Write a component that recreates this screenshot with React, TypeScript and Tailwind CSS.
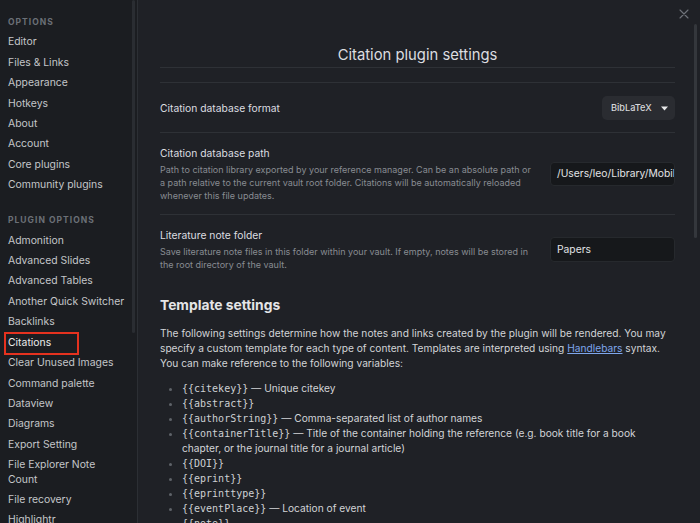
import React from 'react';

const generalItems = ['Editor', 'Files & Links', 'Appearance', 'Hotkeys', 'About', 'Account', 'Core plugins', 'Community plugins'];

const pluginItems = [
  'Admonition',
  'Advanced Slides',
  'Advanced Tables',
  'Another Quick Switcher',
  'Backlinks',
  'Citations',
  'Clear Unused Images',
  'Command palette',
  'Dataview',
  'Diagrams',
  'Export Setting',
  'File Explorer Note Count',
  'File recovery',
  'Highlightr',
  'Hover Editor',
];

const variables: [string, string][] = [
  ['citekey', 'Unique citekey'],
  ['abstract', ''],
  ['authorString', 'Comma-separated list of author names'],
  ['containerTitle', 'Title of the container holding the reference (e.g. book title for a book chapter, or the journal title for a journal article)'],
  ['DOI', ''],
  ['eprint', ''],
  ['eprinttype', ''],
  ['eventPlace', 'Location of event'],
  ['note', ''],
  ['page', 'Page or page range'],
];

const SidebarHeading = ({ children }: { children: React.ReactNode }) => (
  <div className="text-[8.5px] font-bold uppercase tracking-[0.12em] leading-[14.4px] py-[3px] text-[#6b7077]">{children}</div>
);

const SidebarItem = ({ label }: { label: string }) => {
  const active = label === 'Citations';
  return (
    <div className={`relative text-[10.4px] leading-[14.4px] py-[3px] ${active ? 'text-[#eceded]' : 'text-[#c4c6c9]'}`}>
      {label}
      {active && <span className="absolute left-[-4px] top-[-1px] w-[75px] h-[23px] border-2 border-[#e5321f]" />}
    </div>
  );
};

const SettingRow = ({ name, desc, control }: { name: string; desc?: string; control: React.ReactNode }) => (
  <div className="flex items-center border-t border-[#2e3136] pt-[13px] pb-[12px]">
    <div className="flex-1 min-w-0 pr-[14px]">
      <div className="text-[10.3px] leading-[15px] text-[#dcdde0]">{name}</div>
      {desc && <div className="mt-[2px] text-[9px] leading-[13px] text-[#888c92]">{desc}</div>}
    </div>
    {control}
  </div>
);

export default function App() {
  return (
    <div className="flex h-[523px] w-[700px] overflow-hidden bg-[#1f2126] font-['Inter',sans-serif]">
      {/* Sidebar */}
      <aside className="w-[132px] shrink-0 bg-[#1b1d21] pl-[8px] pr-[6px] pt-[12px]">
        <SidebarHeading>Options</SidebarHeading>
        {generalItems.map((i) => (
          <SidebarItem key={i} label={i} />
        ))}
        <div className="mt-[14.6px]">
          <SidebarHeading>Plugin options</SidebarHeading>
        </div>
        {pluginItems.map((i) => (
          <SidebarItem key={i} label={i} />
        ))}
      </aside>

      {/* Sidebar scrollbar + border */}
      <div className="flex shrink-0 bg-[#1b1d21]">
        <div className="w-[3px] flex flex-col">
          <div className="h-[333px] bg-[#2a2d32] rounded-full" />
        </div>
        <div className="w-[2px]" />
        <div className="w-[1px] bg-[#2c2f34]" />
      </div>

      {/* Main */}
      <main className="relative flex flex-1 min-w-0">
        <div className="absolute right-[11px] top-[9px] text-[#6f737a]">
          <svg width="10" height="10" viewBox="0 0 10 10" fill="none" stroke="currentColor" strokeWidth="1.1" strokeLinecap="round">
            <path d="M1 1L9 9M9 1L1 9" />
          </svg>
        </div>

        <div className="flex-1 min-w-0 pl-[22px] pr-[19px] pt-[45px]">
          <div className="text-center text-[14.8px] leading-[20px] pb-[1.5px] text-[#dcdde0] border-b border-[#2e3136]">
            Citation plugin settings
          </div>

          <div className="mt-[14.5px]">
            <SettingRow
              name="Citation database format"
              control={
                <div className="flex h-[24px] w-[73px] shrink-0 items-center rounded-[5px] bg-[#2a2c31] pl-[9px] pr-[7px] text-[9.2px] font-medium text-[#d6d7da]">
                  <span className="flex-1">BibLaTeX</span>
                  <svg width="7" height="5" viewBox="0 0 7 5">
                    <path d="M0 0.5H7L3.5 4.5Z" fill="#e8e8ea" />
                  </svg>
                </div>
              }
            />
            <SettingRow
              name="Citation database path"
              desc="Path to citation library exported by your reference manager. Can be an absolute path or a path relative to the current vault root folder. Citations will be automatically reloaded whenever this file updates."
              control={
                <div className="flex h-[24px] w-[125px] shrink-0 items-center overflow-hidden whitespace-nowrap rounded-[4px] border border-[#26292d] bg-[#16181b] pl-[6px] text-[10.3px] text-[#e2e3e5]">
                  /Users/leo/Library/Mobile Documents
                </div>
              }
            />
            <SettingRow
              name="Literature note folder"
              desc="Save literature note files in this folder within your vault. If empty, notes will be stored in the root directory of the vault."
              control={
                <div className="flex h-[25px] w-[125px] shrink-0 items-center rounded-[4px] border border-[#26292d] bg-[#16181b] pl-[6px] text-[10.3px] text-[#e2e3e5]">
                  Papers
                </div>
              }
            />
          </div>

          <h3 className="mt-[13px] text-[13.8px] leading-[18px] font-bold text-[#e4e5e7]">Template settings</h3>

          <p className="mt-[11.5px] text-[10.2px] leading-[15px] text-[#d2d4d7]">
            The following settings determine how the notes and links created by the plugin will be rendered. You may
            specify a custom template for each type of content. Templates are interpreted using{' '}
            <span className="text-[#7ea6ec] underline">Handlebars</span> syntax. You can make reference to the following
            variables:
          </p>

          <ul className="mt-[10px] list-disc pl-[22px] text-[10.2px] leading-[15px] text-[#d2d4d7] marker:text-[#5f6369]">
            {variables.map(([v, d]) => (
              <li key={v}>
                <span className="font-['DejaVu_Sans_Mono',monospace] text-[10px] text-[#cdd0d3]">{`{{${v}}}`}</span>
                {d && <span> — {d}</span>}
              </li>
            ))}
          </ul>
        </div>

        {/* Main scrollbar */}
        <div className="w-[6px] shrink-0 pt-[24px]">
          <div className="h-[214px] w-[3px] rounded-full bg-[#34373c]" />
        </div>
      </main>
    </div>
  );
}
